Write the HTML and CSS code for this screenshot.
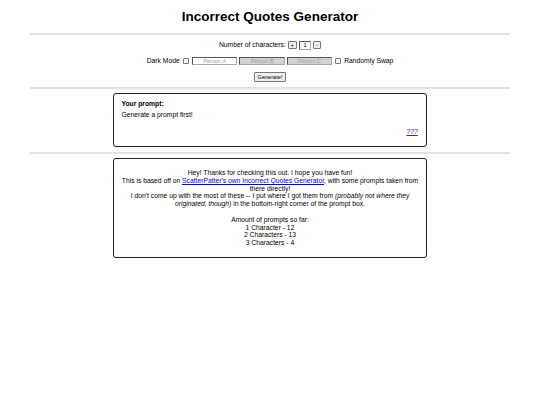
FILE: index.html
```html
<!DOCTYPE html>
<html lang="en">
<head>
<meta charset="utf-8">
<title>Incorrect Quotes Generator</title>
<link rel="stylesheet" href="styles.css">
</head>
<body>
<h1 class="title">Incorrect Quotes Generator</h1>
<hr class="rule">
<div class="controls">
  <div class="row">Number of characters: <button class="step">+</button> <input class="count" type="text" value="1"> <button class="step">-</button></div>
  <div class="row">Dark Mode <input class="check" type="checkbox"> <input class="person" type="text" placeholder="Person A"> <input class="person" type="text" placeholder="Person B" disabled> <input class="person" type="text" placeholder="Person C" disabled> <input class="check" type="checkbox"> Randomly Swap</div>
  <div class="row"><button class="generate">Generate!</button></div>
</div>
<hr class="rule">
<div class="box prompt">
  <div class="label">Your prompt:</div>
  <div class="prompt-text">Generate a prompt first!</div>
  <div class="source"><a class="source-link" href="#">???</a></div>
</div>
<hr class="rule">
<div class="box info">
  Hey! Thanks for checking this out. I hope you have fun!<br>
  This is based off on <a class="link" href="#">ScatterPatter's own Incorrect Quotes Generator</a>, with some prompts taken from there directly!<br>
  I don't come up with the most of these -- I put where I got them from <i>(probably not where they originated, though)</i> in the bottom-right corner of the prompt box.<br>
  <br>
  Amount of prompts so far:<br>
  1 Character - 12<br>
  2 Characters - 13<br>
  3 Characters - 4
</div>
</body>
</html>
```
FILE: styles.css
```css
html {
  background: #ffffff;
}
body {
  margin: 0;
  padding: 0 3.4px;
  font-family: "Liberation Sans", Arial, sans-serif;
  font-size: 6.75px;
  line-height: 7.8px;
  color: #000;
}
.title {
  font-size: 13.5px;
  line-height: 16px;
  font-weight: bold;
  text-align: center;
  margin: 9px 0 0;
}
.rule {
  width: 90%;
  margin: 0 auto;
  border: none;
  height: 2px;
  background: #e2e2e2;
}
.title + .rule {
  margin-top: 7.5px;
}
.controls {
  text-align: center;
  padding: 5.4px 0 5.8px;
}
.row {
  height: 9.3px;
  line-height: 9.3px;
  margin-bottom: 6.7px;
  white-space: nowrap;
}
.row:last-child {
  margin-bottom: 0;
}
button, input {
  font-family: "Liberation Sans", Arial, sans-serif;
  font-size: 5.625px;
  line-height: 6.46px;
  vertical-align: middle;
  margin: 0;
  box-sizing: content-box;
}
button {
  background: #efefef;
  border: 1px solid #767676;
  border-radius: 1px;
  padding: 0.4px 2.5px;
  color: #000;
}
.step {
  padding: 0 2px;
  font-size: 5.1px;
  line-height: 6.3px;
}
input[type="text"] {
  border: 1px solid #555;
  border-right-color: #aaa;
  border-bottom-color: #aaa;
  padding: 0.4px 0.8px;
  background: #fff;
  color: #000;
}
.count {
  width: 9.3px;
  text-align: center;
}
.person {
  width: 41.8px;
  text-align: center;
}
.person::placeholder {
  font-style: italic;
  color: #9c9c9c;
}
.person:disabled {
  background: #d2d2d2;
}
.check {
  appearance: none;
  -webkit-appearance: none;
  box-sizing: border-box;
  width: 5.5px;
  height: 5.5px;
  margin: 1.3px 1.3px 1.3px 1.7px;
  border: 1px solid #767676;
  border-radius: 1px;
  background: #fff;
}
.box {
  box-sizing: border-box;
  width: 314px;
  margin: 4.5px auto 4.3px;
  border: 1px solid #222;
  border-radius: 3px;
}
.prompt {
  padding: 5.6px 8.3px 10.6px 7.4px;
}
.label {
  font-weight: bold;
}
.prompt-text {
  margin-top: 3.2px;
}
.source {
  margin-top: 9.2px;
  text-align: right;
}
.source-link {
  color: #551a8b;
  font-style: italic;
}
.info {
  margin-top: 3.8px;
  padding: 10.5px 6.5px;
  text-align: center;
}
.link {
  color: #0000ee;
}
```
